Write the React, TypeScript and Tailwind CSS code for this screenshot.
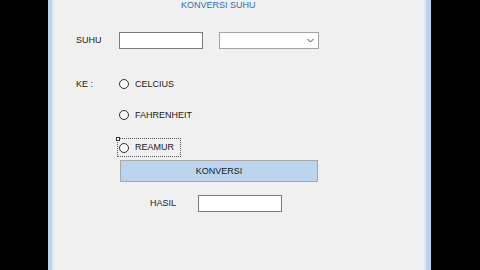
import React from "react";

function Radio({ label }: { label: string }) {
  return (
    <div className="flex items-center">
      <span className="w-[10px] h-[10px] rounded-full border border-[#333333] bg-[#f7f7f7] box-border" />
      <span className="ml-[6px] leading-none">{label}</span>
    </div>
  );
}

export default function App() {
  return (
    <div
      className="w-[480px] h-[270px] bg-black flex overflow-hidden text-[9px] text-[#1a1a1a]"
      style={{ fontFamily: '"Liberation Sans", Arial, sans-serif' }}
    >
      <div className="w-[48px] shrink-0" />
      <div className="w-[383px] shrink-0 h-full flex bg-[#bcd3ee]">
        <div className="w-[4px] shrink-0" />
        <div className="w-[2px] shrink-0 bg-[#dde9f7]" />
        <div className="w-[370px] shrink-0 h-full bg-[#f0f0f0] flex flex-col">
          <div className="h-[11px] leading-[11px] pl-[127px] text-[#2f6db5]">KONVERSI SUHU</div>

          <div className="mt-[21px] flex items-center h-[17px] pl-[22px]">
            <span className="w-[43px] leading-none">SUHU</span>
            <div className="w-[84px] h-[17px] bg-white border border-[#7a7a7a] box-border" />
            <div className="ml-[16px] w-[100px] h-[17px] bg-white border border-[#a3a3a3] box-border flex items-center justify-end pr-[4px]">
              <svg width="7" height="5" viewBox="0 0 7 5">
                <path d="M0.5 1 L3.5 4 L6.5 1" fill="none" stroke="#444" strokeWidth="1" />
              </svg>
            </div>
          </div>

          <div className="mt-[26px] flex items-center h-[18px] pl-[22px]">
            <span className="w-[43px] leading-none">KE :</span>
            <Radio label="CELCIUS" />
          </div>

          <div className="mt-[13px] flex items-center h-[18px] pl-[65px]">
            <Radio label="FAHRENHEIT" />
          </div>

          <div className="mt-[14px] flex h-[19px] pl-[63px]">
            <div className="relative w-[64px] h-[19px] border border-dotted border-[#555] box-border flex items-center pl-[1px]">
              <span className="absolute -left-[2px] -top-[2px] w-[4px] h-[4px] bg-white border border-[#333] box-border" />
              <Radio label="REAMUR" />
            </div>
          </div>

          <div className="mt-[3px] pl-[66px]">
            <div className="w-[198px] h-[22px] bg-[#bcd4ee] border border-[#a9a9a9] box-border flex items-center justify-center leading-none">
              KONVERSI
            </div>
          </div>

          <div className="mt-[13px] flex items-center h-[17px] pl-[96px]">
            <span className="w-[48px] leading-none">HASIL</span>
            <div className="w-[84px] h-[17px] bg-white border border-[#7a7a7a] box-border" />
          </div>
        </div>
        <div className="w-[2px] shrink-0 bg-[#dde9f7]" />
        <div className="w-[5px] shrink-0" />
      </div>
      <div className="flex-1" />
    </div>
  );
}
